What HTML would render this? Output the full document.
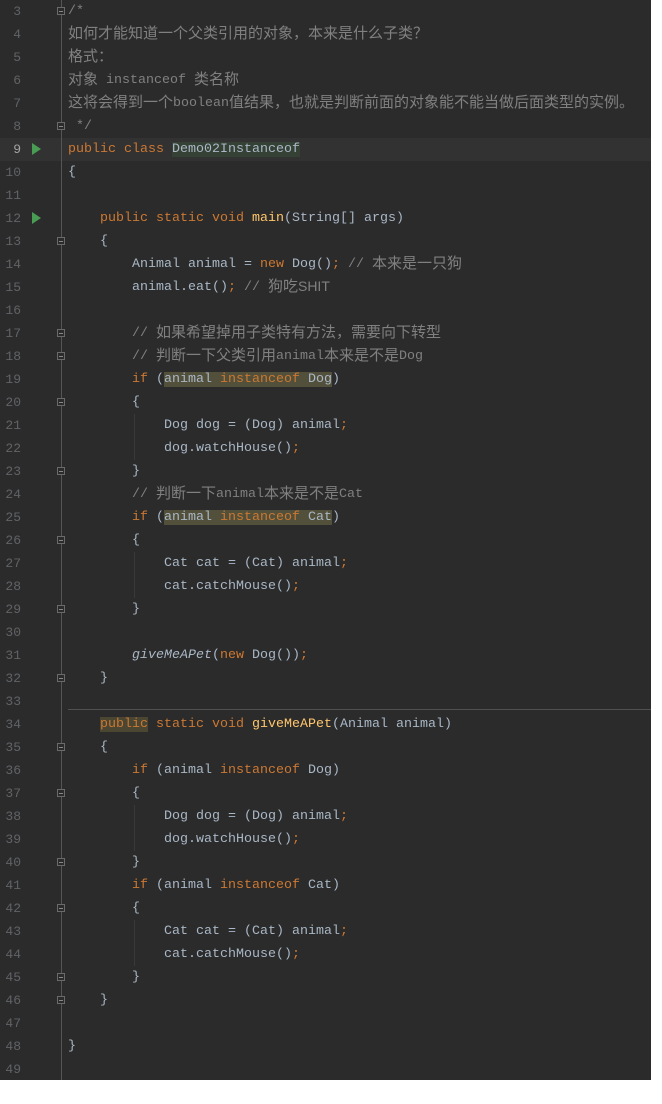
<!DOCTYPE html>
<html><head><meta charset="utf-8"><style>
body{margin:0;background:#fff;width:662px;height:1104px;overflow:hidden}
#ed{position:absolute;left:0;top:0;width:651px;height:1080px;background:#2b2b2b;font-family:"Liberation Mono",monospace;font-size:13.33px;color:#a9b7c6}
.gl{position:absolute;left:61px;top:0;width:1px;height:1080px;background:#555}
.r{position:absolute;left:0;width:651px;height:23px;line-height:23px;white-space:pre}
.n{position:absolute;left:0;width:21px;text-align:right;color:#606366;font-size:13px}
.c{position:absolute;left:68px;top:0;height:23px;line-height:23px}
.k{color:#cc7832}.m{color:#ffc66d}.cm{color:#808080}.i{font-style:italic}
.z{font-family:"Noto Sans CJK SC",sans-serif;font-size:15px;line-height:1;position:relative;top:1px}
.p{font-family:"Liberation Sans",sans-serif;font-size:14px;line-height:1;position:relative;top:1px}
.hl{background:#52503a}.hg{background:#344134}.hp{background:#4a4632}
.f{position:absolute;left:57px;width:8px;height:8px;border:1px solid #6a6a6a;background:#2b2b2b;box-sizing:border-box}
.f:after{content:"";position:absolute;left:1px;top:3px;width:4px;height:1px;background:#888}
.run{position:absolute;left:32px;width:0;height:0;border-left:9px solid #499c54;border-top:6px solid transparent;border-bottom:6px solid transparent}
.ig{position:absolute;width:1px;background:#393939}
</style></head><body><div id="ed">
<div class="r" style="top:138px;background:#323232"></div>
<div class="gl"></div>
<div style="position:absolute;left:68px;top:709px;width:583px;height:1px;background:#515151"></div>
<div class="ig" style="left:134px;top:414px;height:46px"></div>
<div class="ig" style="left:134px;top:552px;height:46px"></div>
<div class="ig" style="left:134px;top:805px;height:46px"></div>
<div class="ig" style="left:134px;top:920px;height:46px"></div>

<div class="r" style="top:0"><span class="n">3</span><span class="c cm">/*</span></div>
<div class="r" style="top:23px"><span class="n">4</span><span class="c cm"><span class="z">如何才能知道一个父类引用的对象，本来是什么子类？</span></span></div>
<div class="r" style="top:46px"><span class="n">5</span><span class="c cm"><span class="z">格式：</span></span></div>
<div class="r" style="top:69px"><span class="n">6</span><span class="c cm"><span class="z">对象</span> instanceof <span class="z">类名称</span></span></div>
<div class="r" style="top:92px"><span class="n">7</span><span class="c cm"><span class="z">这将会得到一个</span>boolean<span class="z">值结果，也就是判断前面的对象能不能当做后面类型的实例。</span></span></div>
<div class="r" style="top:115px"><span class="n">8</span><span class="c cm"> */</span></div>
<div class="r" style="top:138px"><span class="n" style="color:#a4a3a3">9</span><span class="c"><span class="k">public class </span><span class="hg">Demo02Instanceof</span></span></div>
<div class="r" style="top:161px"><span class="n">10</span><span class="c">{</span></div>
<div class="r" style="top:184px"><span class="n">11</span></div>
<div class="r" style="top:207px"><span class="n">12</span><span class="c">    <span class="k">public static void </span><span class="m">main</span>(String[] args)</span></div>
<div class="r" style="top:230px"><span class="n">13</span><span class="c">    {</span></div>
<div class="r" style="top:253px"><span class="n">14</span><span class="c">        Animal animal = <span class="k">new </span>Dog()<span class="k">;</span> <span class="cm">// <span class="z">本来是一只狗</span></span></span></div>
<div class="r" style="top:276px"><span class="n">15</span><span class="c">        animal.eat()<span class="k">;</span> <span class="cm">// <span class="z">狗吃</span><span class="p">SHIT</span></span></span></div>
<div class="r" style="top:299px"><span class="n">16</span></div>
<div class="r" style="top:322px"><span class="n">17</span><span class="c cm">        // <span class="z">如果希望掉用子类特有方法，需要向下转型</span></span></div>
<div class="r" style="top:345px"><span class="n">18</span><span class="c cm">        // <span class="z">判断一下父类引用</span>animal<span class="z">本来是不是</span>Dog</span></div>
<div class="r" style="top:368px"><span class="n">19</span><span class="c">        <span class="k">if </span>(<span class="hl">animal <span class="k">instanceof</span> Dog</span>)</span></div>
<div class="r" style="top:391px"><span class="n">20</span><span class="c">        {</span></div>
<div class="r" style="top:414px"><span class="n">21</span><span class="c">            Dog dog = (Dog) animal<span class="k">;</span></span></div>
<div class="r" style="top:437px"><span class="n">22</span><span class="c">            dog.watchHouse()<span class="k">;</span></span></div>
<div class="r" style="top:460px"><span class="n">23</span><span class="c">        }</span></div>
<div class="r" style="top:483px"><span class="n">24</span><span class="c cm">        // <span class="z">判断一下</span>animal<span class="z">本来是不是</span>Cat</span></div>
<div class="r" style="top:506px"><span class="n">25</span><span class="c">        <span class="k">if </span>(<span class="hl">animal <span class="k">instanceof</span> Cat</span>)</span></div>
<div class="r" style="top:529px"><span class="n">26</span><span class="c">        {</span></div>
<div class="r" style="top:552px"><span class="n">27</span><span class="c">            Cat cat = (Cat) animal<span class="k">;</span></span></div>
<div class="r" style="top:575px"><span class="n">28</span><span class="c">            cat.catchMouse()<span class="k">;</span></span></div>
<div class="r" style="top:598px"><span class="n">29</span><span class="c">        }</span></div>
<div class="r" style="top:621px"><span class="n">30</span></div>
<div class="r" style="top:644px"><span class="n">31</span><span class="c">        <span class="i">giveMeAPet</span>(<span class="k">new </span>Dog())<span class="k">;</span></span></div>
<div class="r" style="top:667px"><span class="n">32</span><span class="c">    }</span></div>
<div class="r" style="top:690px"><span class="n">33</span></div>
<div class="r" style="top:713px"><span class="n">34</span><span class="c">    <span class="k"><span class="hp">public</span> static void </span><span class="m">giveMeAPet</span>(Animal animal)</span></div>
<div class="r" style="top:736px"><span class="n">35</span><span class="c">    {</span></div>
<div class="r" style="top:759px"><span class="n">36</span><span class="c">        <span class="k">if </span>(animal <span class="k">instanceof</span> Dog)</span></div>
<div class="r" style="top:782px"><span class="n">37</span><span class="c">        {</span></div>
<div class="r" style="top:805px"><span class="n">38</span><span class="c">            Dog dog = (Dog) animal<span class="k">;</span></span></div>
<div class="r" style="top:828px"><span class="n">39</span><span class="c">            dog.watchHouse()<span class="k">;</span></span></div>
<div class="r" style="top:851px"><span class="n">40</span><span class="c">        }</span></div>
<div class="r" style="top:874px"><span class="n">41</span><span class="c">        <span class="k">if </span>(animal <span class="k">instanceof</span> Cat)</span></div>
<div class="r" style="top:897px"><span class="n">42</span><span class="c">        {</span></div>
<div class="r" style="top:920px"><span class="n">43</span><span class="c">            Cat cat = (Cat) animal<span class="k">;</span></span></div>
<div class="r" style="top:943px"><span class="n">44</span><span class="c">            cat.catchMouse()<span class="k">;</span></span></div>
<div class="r" style="top:966px"><span class="n">45</span><span class="c">        }</span></div>
<div class="r" style="top:989px"><span class="n">46</span><span class="c">    }</span></div>
<div class="r" style="top:1012px"><span class="n">47</span></div>
<div class="r" style="top:1035px"><span class="n">48</span><span class="c">}</span></div>
<div class="r" style="top:1058px"><span class="n">49</span></div>

<div class="run" style="top:143px"></div>
<div class="run" style="top:212px"></div>
<div class="f" style="top:7px"></div>
<div class="f" style="top:122px"></div>
<div class="f" style="top:237px"></div>
<div class="f" style="top:329px"></div>
<div class="f" style="top:352px"></div>
<div class="f" style="top:398px"></div>
<div class="f" style="top:467px"></div>
<div class="f" style="top:536px"></div>
<div class="f" style="top:605px"></div>
<div class="f" style="top:674px"></div>
<div class="f" style="top:743px"></div>
<div class="f" style="top:789px"></div>
<div class="f" style="top:858px"></div>
<div class="f" style="top:904px"></div>
<div class="f" style="top:973px"></div>
<div class="f" style="top:996px"></div>
</div></body></html>
